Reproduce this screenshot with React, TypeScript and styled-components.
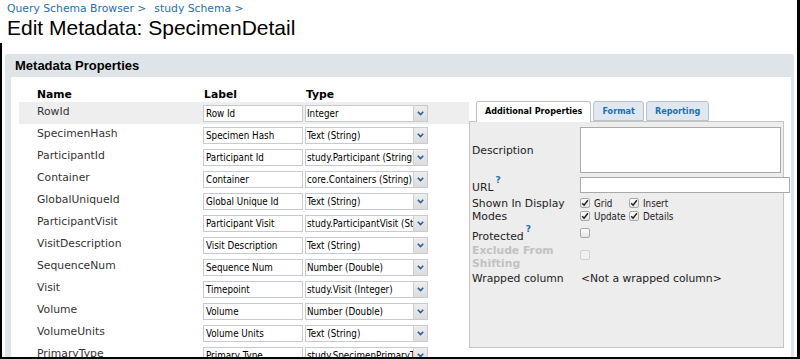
import React from "react";
import styled, { createGlobalStyle, css } from "styled-components";

const GlobalStyle = createGlobalStyle`
  html, body { margin: 0; padding: 0; background: #fff; }
  body { width: 800px; height: 359px; overflow: hidden; font-family: "DejaVu Sans", Verdana, sans-serif; }
  * { box-sizing: border-box; }
`;

const Page = styled.div`
  width: 800px;
  height: 359px;
  overflow: hidden;
  border-right: 3px solid #000;
  border-bottom: 2px solid #000;
  display: flex;
  flex-direction: column;
`;

const TopBar = styled.header`
  height: 43px;
  padding: 2px 0 0 7px;
`;

const Crumbs = styled.div`
  font-family: "DejaVu Sans", Verdana, sans-serif;
  font-size: 10.8px;
  line-height: 14px;
  color: #2670a9;
  display: flex;
  gap: 8px;
`;

const Title = styled.h1`
  margin: 0;
  font-family: "Liberation Sans", Arial, sans-serif;
  font-weight: normal;
  font-size: 21px;
  line-height: 24px;
  color: #000;
`;

const Frame = styled.div`
  flex: 1;
  min-height: 0;
  border-left: 2px solid #000;
  padding: 11px 3px 0 3px;
`;

const Panel = styled.section`
  height: 100%;
  background: #dfe4e8;
  border-radius: 3px 3px 0 0;
  padding: 0 3px 0 6px;
  display: flex;
  flex-direction: column;
`;

const PanelTitle = styled.h2`
  margin: 0;
  height: 23px;
  padding-left: 4px;
  font-family: "Liberation Sans", Arial, sans-serif;
  font-weight: bold;
  font-size: 13px;
  line-height: 24px;
  color: #000;
`;

const PanelBody = styled.div`
  flex: 1;
  background: #fff;
  padding: 11px 0 0 8px;
  display: flex;
  align-items: flex-start;
  overflow: hidden;
`;

const FieldTable = styled.div`
  width: 450px;
  display: flex;
  flex-direction: column;
`;

const Grid = styled.div<{ $selected?: boolean; $head?: boolean }>`
  display: grid;
  grid-template-columns: 184px 102px 123px 1fr;
  align-items: center;
  height: ${(p) => (p.$head ? "14px" : "22px")};
  background: ${(p) => (p.$selected ? "#eeeeee" : "transparent")};
`;

const HeadCell = styled.div<{ $indent?: boolean }>`
  padding-left: ${(p) => (p.$indent ? "18px" : "1px")};
  font-family: "DejaVu Sans", Verdana, sans-serif;
  font-weight: bold;
  font-size: 10.8px;
  line-height: 14px;
  color: #000;
`;

const NameCell = styled.div`
  padding-left: 18px;
  padding-bottom: 3px;
  font-family: "DejaVu Sans", Verdana, sans-serif;
  font-size: 10.8px;
  color: #333;
  white-space: nowrap;
`;

const fieldText = css`
  font-family: "DejaVu Sans Condensed", Tahoma, sans-serif;
  font-size: 9.75px;
  color: #000;
`;

const TextBox = styled.div`
  ${fieldText};
  width: 100px;
  height: 17px;
  border: 1px solid #c6cbd1;
  background: #fff;
  padding: 0 2px;
  line-height: 15px;
  white-space: nowrap;
  overflow: hidden;
`;

const SelectBox = styled.div`
  ${fieldText};
  width: 123px;
  height: 17px;
  border: 1px solid #c6cbd1;
  background: #fff;
  display: flex;
  line-height: 15px;
`;

const SelectText = styled.span`
  flex: 1;
  padding-left: 1px;
  white-space: nowrap;
  overflow: hidden;
`;

const SelectArrow = styled.span`
  width: 14px;
  background: linear-gradient(#eeeeee, #dcdcdc);
  border-left: 1px solid #d0d0d0;
  display: flex;
  align-items: center;
  justify-content: center;
`;

const TabArea = styled.div`
  margin-top: 13px;
  width: 315px;
  display: flex;
  flex-direction: column;
`;

const TabStrip = styled.div`
  display: flex;
  gap: 2px;
  padding-left: 7px;
  height: 20px;
  position: relative;
  z-index: 1;
`;

const Tab = styled.div<{ $active?: boolean }>`
  height: ${(p) => (p.$active ? "21px" : "20px")};
  padding: 0 8px;
  border: 1px solid #c0c0c0;
  border-bottom: ${(p) => (p.$active ? "none" : "1px solid #c0c0c0")};
  border-radius: 3px 3px 0 0;
  background: ${(p) => (p.$active ? "#fff" : "#dfe8f1")};
  font-family: "DejaVu Sans Condensed", Tahoma, sans-serif;
  font-weight: bold;
  font-size: 9px;
  line-height: 19px;
  color: ${(p) => (p.$active ? "#000" : "#1f6ea9")};
  white-space: nowrap;
`;

const TabContent = styled.div`
  height: 227px;
  background: #ededed;
  border: 1px solid #c4c4c4;
  padding: 4px 0 0 2px;
  display: flex;
  flex-direction: column;
`;

const PropRow = styled.div<{ $gap: number }>`
  display: grid;
  grid-template-columns: 108px 1fr;
  align-items: start;
  margin-top: ${(p) => p.$gap}px;
`;

const PropLabel = styled.div<{ $h?: number; $muted?: boolean; $pt?: number }>`
  font-family: "DejaVu Sans", Verdana, sans-serif;
  font-size: 10.8px;
  line-height: 13px;
  color: ${(p) => (p.$muted ? "#c2c2c2" : "#222")};
  font-weight: ${(p) => (p.$muted ? "bold" : "normal")};
  height: ${(p) => (p.$h ? `${p.$h}px` : "auto")};
  padding-top: ${(p) => p.$pt ?? 0}px;
  display: ${(p) => (p.$h ? "flex" : "block")};
  align-items: center;
`;

const Help = styled.sup`
  position: relative;
  top: -1px;
  margin-left: 2px;
  font-size: 9px;
  font-weight: bold;
  color: #2670a9;
  vertical-align: top;
  line-height: 0;
`;

const TextArea = styled.div`
  width: 201px;
  height: 46px;
  border: 1px solid #a9a9a9;
  background: #fff;
`;

const UrlInput = styled.div`
  width: 210px;
  height: 16px;
  border: 1px solid #a9a9a9;
  background: #fff;
`;

const ModeGrid = styled.div`
  display: grid;
  grid-template-columns: 49px auto;
  grid-auto-rows: 13px;
  ${fieldText};
  color: #222;
`;

const ModeItem = styled.label`
  display: flex;
  align-items: flex-start;
  gap: 4px;
  line-height: 13px;
  white-space: nowrap;
`;

const Box = styled.span<{ $disabled?: boolean; $mt?: number }>`
  display: inline-flex;
  align-items: center;
  justify-content: center;
  width: 10px;
  height: 10px;
  margin-top: ${(p) => p.$mt ?? 1}px;
  border: 1px solid ${(p) => (p.$disabled ? "#d2d2d2" : "#a8a8a8")};
  border-radius: 2px;
  background: ${(p) => (p.$disabled ? "#f0f0f0" : "linear-gradient(#fdfdfd, #e4e4e4)")};
  flex: none;
`;

const ValueText = styled.div`
  font-family: "DejaVu Sans", Verdana, sans-serif;
  font-size: 10.8px;
  line-height: 13px;
  color: #222;
  padding-left: 1px;
`;

const Check = () => (
  <svg width="8" height="8" viewBox="0 0 8 8">
    <path d="M1.2 4.2 L3.1 6.2 L6.9 1.3" fill="none" stroke="#222" strokeWidth="1.5" />
  </svg>
);

const Chevron = () => (
  <svg width="7" height="5" viewBox="0 0 7 5">
    <path d="M0.8 0.8 L3.5 3.6 L6.2 0.8" fill="none" stroke="#2c5c98" strokeWidth="1.6" />
  </svg>
);

const Checkbox = ({ checked, disabled, mt }: { checked?: boolean; disabled?: boolean; mt?: number }) => (
  <Box $disabled={disabled} $mt={mt}>{checked ? <Check /> : null}</Box>
);

const fields: [string, string, string][] = [
  ["RowId", "Row Id", "Integer"],
  ["SpecimenHash", "Specimen Hash", "Text (String)"],
  ["ParticipantId", "Participant Id", "study.Participant (String)"],
  ["Container", "Container", "core.Containers (String)"],
  ["GlobalUniqueId", "Global Unique Id", "Text (String)"],
  ["ParticipantVisit", "Participant Visit", "study.ParticipantVisit (String)"],
  ["VisitDescription", "Visit Description", "Text (String)"],
  ["SequenceNum", "Sequence Num", "Number (Double)"],
  ["Visit", "Timepoint", "study.Visit (Integer)"],
  ["Volume", "Volume", "Number (Double)"],
  ["VolumeUnits", "Volume Units", "Text (String)"],
  ["PrimaryType", "Primary Type", "study.SpecimenPrimaryType (Integer)"],
];

export default function App() {
  return (
    <>
      <GlobalStyle />
      <Page>
        <TopBar>
          <Crumbs>
            <span>Query Schema Browser &gt;</span>
            <span>study Schema &gt;</span>
          </Crumbs>
          <Title>Edit Metadata: SpecimenDetail</Title>
        </TopBar>
        <Frame>
          <Panel>
            <PanelTitle>Metadata Properties</PanelTitle>
            <PanelBody>
              <FieldTable>
                <Grid $head>
                  <HeadCell $indent>Name</HeadCell>
                  <HeadCell>Label</HeadCell>
                  <HeadCell>Type</HeadCell>
                </Grid>
                {fields.map(([name, label, type], i) => (
                  <Grid key={name} $selected={i === 0}>
                    <NameCell>{name}</NameCell>
                    <TextBox>{label}</TextBox>
                    <SelectBox>
                      <SelectText>{type}</SelectText>
                      <SelectArrow>
                        <Chevron />
                      </SelectArrow>
                    </SelectBox>
                  </Grid>
                ))}
              </FieldTable>
              <TabArea>
                <TabStrip>
                  <Tab $active>Additional Properties</Tab>
                  <Tab>Format</Tab>
                  <Tab>Reporting</Tab>
                </TabStrip>
                <TabContent>
                  <PropRow $gap={1}>
                    <PropLabel $h={46}>Description</PropLabel>
                    <TextArea />
                  </PropRow>
                  <PropRow $gap={4}>
                    <PropLabel $pt={4}>
                      URL<Help>?</Help>
                    </PropLabel>
                    <UrlInput />
                  </PropRow>
                  <PropRow $gap={3}>
                    <PropLabel>
                      Shown In Display
                      <br />
                      Modes
                    </PropLabel>
                    <ModeGrid>
                      <ModeItem>
                        <Checkbox checked /> Grid
                      </ModeItem>
                      <ModeItem>
                        <Checkbox checked /> Insert
                      </ModeItem>
                      <ModeItem>
                        <Checkbox checked /> Update
                      </ModeItem>
                      <ModeItem>
                        <Checkbox checked /> Details
                      </ModeItem>
                    </ModeGrid>
                  </PropRow>
                  <PropRow $gap={2}>
                    <PropLabel $pt={5}>
                      Protected<Help>?</Help>
                    </PropLabel>
                    <Checkbox mt={3} />
                  </PropRow>
                  <PropRow $gap={1}>
                    <PropLabel $muted>
                      Exclude From
                      <br />
                      Shifting
                    </PropLabel>
                    <Checkbox disabled mt={6} />
                  </PropRow>
                  <PropRow $gap={2}>
                    <PropLabel>Wrapped column</PropLabel>
                    <ValueText>&lt;Not a wrapped column&gt;</ValueText>
                  </PropRow>
                </TabContent>
              </TabArea>
            </PanelBody>
          </Panel>
        </Frame>
      </Page>
    </>
  );
}
